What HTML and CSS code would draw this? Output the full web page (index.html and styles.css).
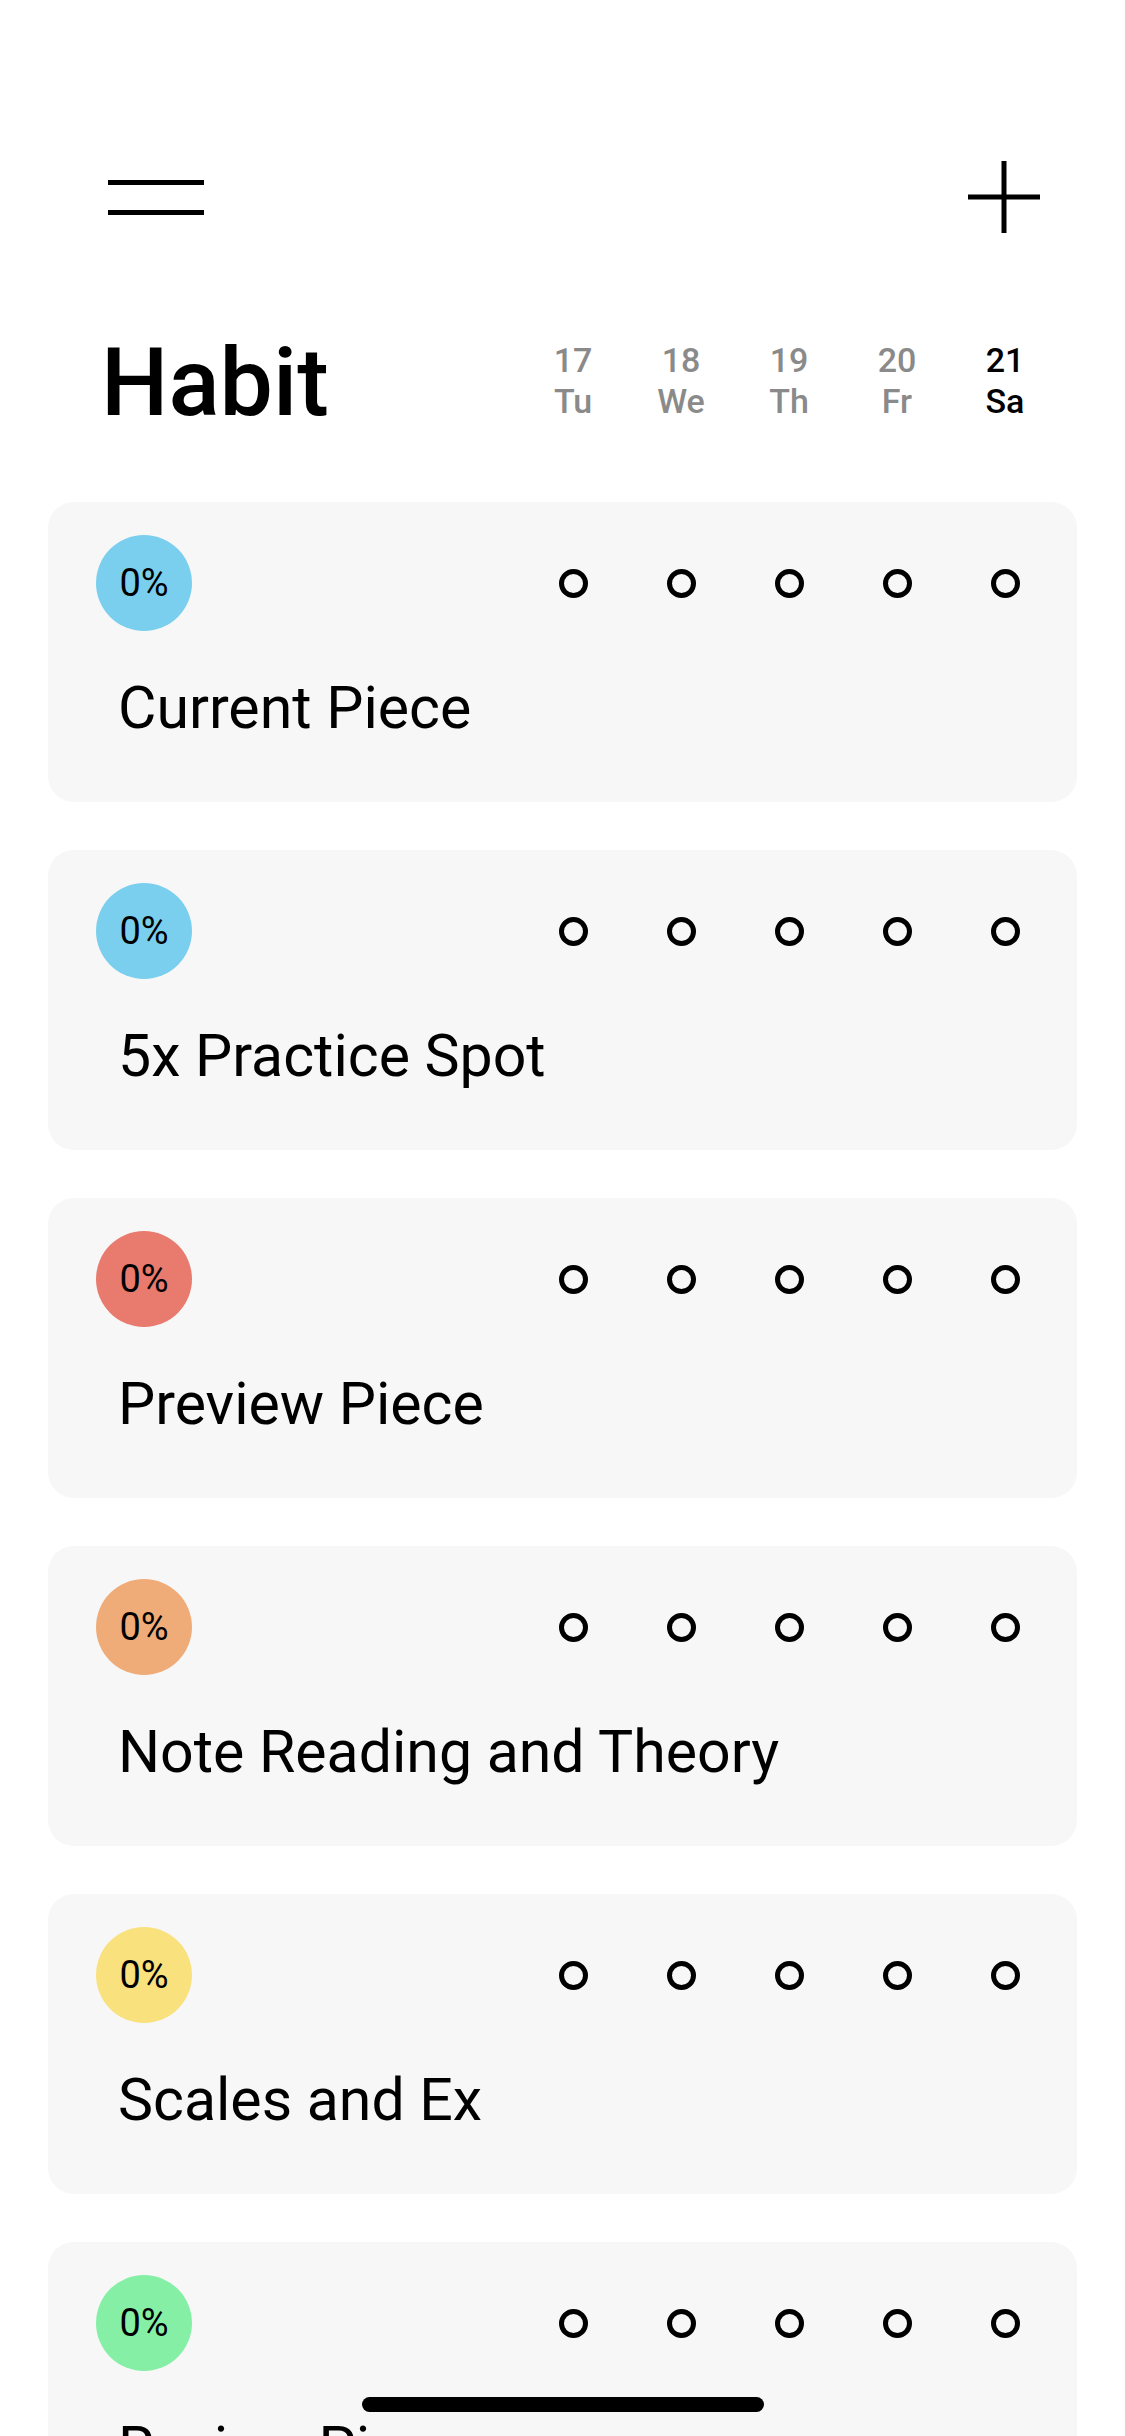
FILE: index.html
```html
<!DOCTYPE html>
<html lang="en">

<head>
    <meta charset="UTF-8">
    <meta name="viewport" content="width=device-width, initial-scale=1.0">
    <title>Habit</title>
    <link rel="stylesheet" href="styles.css">
</head>

<body>
    <div class="app">
        <div class="topbar">
            <div class="menu">
                <span></span>
                <span></span>
            </div>
            <svg class="add" viewBox="0 0 72 72" xmlns="http://www.w3.org/2000/svg">
                <path d="M36 0v72M0 36h72" stroke="#000" stroke-width="5" fill="none" />
            </svg>
        </div>

        <div class="header">
            <h1 class="title">Habit</h1>
            <div class="days">
                <div class="day"><span>17</span><span>Tu</span></div>
                <div class="day"><span>18</span><span>We</span></div>
                <div class="day"><span>19</span><span>Th</span></div>
                <div class="day"><span>20</span><span>Fr</span></div>
                <div class="day today"><span>21</span><span>Sa</span></div>
            </div>
        </div>

        <div class="list">
            <div class="card">
                <div class="card-top">
                    <div class="badge blue">0%</div>
                    <div class="checks">
                        <div class="check"></div><div class="check"></div><div class="check"></div><div class="check"></div><div class="check"></div>
                    </div>
                </div>
                <div class="name">Current Piece</div>
            </div>
            <div class="card">
                <div class="card-top">
                    <div class="badge blue">0%</div>
                    <div class="checks">
                        <div class="check"></div><div class="check"></div><div class="check"></div><div class="check"></div><div class="check"></div>
                    </div>
                </div>
                <div class="name">5x Practice Spot</div>
            </div>
            <div class="card">
                <div class="card-top">
                    <div class="badge red">0%</div>
                    <div class="checks">
                        <div class="check"></div><div class="check"></div><div class="check"></div><div class="check"></div><div class="check"></div>
                    </div>
                </div>
                <div class="name">Preview Piece</div>
            </div>
            <div class="card">
                <div class="card-top">
                    <div class="badge orange">0%</div>
                    <div class="checks">
                        <div class="check"></div><div class="check"></div><div class="check"></div><div class="check"></div><div class="check"></div>
                    </div>
                </div>
                <div class="name">Note Reading and Theory</div>
            </div>
            <div class="card">
                <div class="card-top">
                    <div class="badge yellow">0%</div>
                    <div class="checks">
                        <div class="check"></div><div class="check"></div><div class="check"></div><div class="check"></div><div class="check"></div>
                    </div>
                </div>
                <div class="name">Scales and Ex</div>
            </div>
            <div class="card">
                <div class="card-top">
                    <div class="badge green">0%</div>
                    <div class="checks">
                        <div class="check"></div><div class="check"></div><div class="check"></div><div class="check"></div><div class="check"></div>
                    </div>
                </div>
                <div class="name">Review Pieces</div>
            </div>
        </div>
    </div>
    <div class="home-indicator"></div>
</body>

</html>
```

FILE: styles.css
```css
body {
    font-family: Roboto, "Noto Sans", sans-serif;
    margin: 0;
    background-color: white;
    color: black;
    height: 2436px;
    overflow: hidden;
}

/* Top bar */
.topbar {
    display: flex;
    justify-content: space-between;
    align-items: center;
    padding: 161px 85px 0 108px;
}

.menu {
    width: 96px;
    display: flex;
    flex-direction: column;
    gap: 25px;
}

.menu span {
    display: block;
    height: 5px;
    background-color: black;
}

.add {
    width: 72px;
    height: 72px;
    display: block;
}

/* Header with dates */
.header {
    display: flex;
    justify-content: space-between;
    align-items: flex-start;
    margin-top: 102px;
    padding: 0 66px 0 101px;
}

.title {
    margin: 0;
    font-size: 95px;
    line-height: 1;
    font-weight: 500;
}

.days {
    display: grid;
    grid-template-columns: repeat(5, 108px);
    padding-top: 5px;
}

.day {
    display: flex;
    flex-direction: column;
    align-items: center;
    font-size: 34px;
    line-height: 41px;
    font-weight: 500;
    color: #8a8a8a;
}

.today {
    color: black;
}

/* Habit cards */
.list {
    display: flex;
    flex-direction: column;
    gap: 48px;
    margin-top: 72px;
    padding: 0 48px;
}

.card {
    height: 300px;
    box-sizing: border-box;
    background-color: #f7f7f7;
    border-radius: 26px;
    padding: 33px 18px 0 48px;
}

.card-top {
    display: flex;
    justify-content: space-between;
    align-items: center;
}

.badge {
    width: 96px;
    height: 96px;
    border-radius: 50%;
    display: grid;
    place-items: center;
    font-size: 38px;
}

.blue {
    background-color: #7acfee;
}

.red {
    background-color: #e97a6e;
}

.orange {
    background-color: #f0ac78;
}

.yellow {
    background-color: #f9e17e;
}

.green {
    background-color: #86efa6;
}

.checks {
    display: grid;
    grid-template-columns: repeat(5, 108px);
    justify-items: center;
}

.check {
    width: 29px;
    height: 29px;
    box-sizing: border-box;
    border: 5px solid black;
    border-radius: 50%;
}

.name {
    margin-top: 47px;
    padding-left: 22px;
    font-size: 59px;
    line-height: 1;
}

.home-indicator {
    position: fixed;
    left: 50%;
    bottom: 24px;
    width: 402px;
    height: 15px;
    margin-left: -201px;
    border-radius: 8px;
    background-color: black;
}
```
